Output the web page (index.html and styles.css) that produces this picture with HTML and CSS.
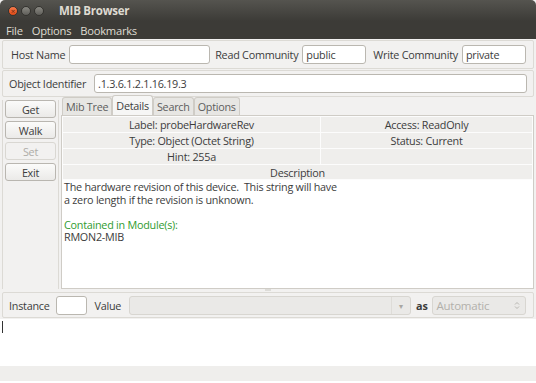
FILE: index.html
```html
<!DOCTYPE html>
<html lang="en">
<head>
<meta charset="UTF-8">
<title>MIB Browser</title>
<link rel="stylesheet" href="styles.css">
</head>
<body>

<div class="window">
    <!-- title bar -->
    <div class="titlebar">
        <span class="wbtn close">&times;</span>
        <span class="wbtn"></span>
        <span class="wbtn"></span>
        <span class="title">MIB Browser</span>
    </div>
    <div class="menubar">
        <span>File</span>
        <span>Options</span>
        <span>Bookmarks</span>
    </div>

    <div class="body">
        <!-- host / community -->
        <div class="panel row1">
            <label>Host Name</label>
            <input class="field host" type="text">
            <label>Read Community</label>
            <input class="field comm" type="text" value="public">
            <label>Write Community</label>
            <input class="field comm" type="text" value="private">
        </div>

        <div class="panel row2">
            <label>Object Identifier</label>
            <input class="field oid" type="text" value=".1.3.6.1.2.1.16.19.3">
        </div>

        <div class="main">
            <div class="actions">
                <button class="btn">Get</button>
                <button class="btn">Walk</button>
                <button class="btn" disabled>Set</button>
                <button class="btn">Exit</button>
            </div>

            <div class="tabs-wrap">
                <div class="tabs">
                    <span class="tab">Mib Tree</span>
                    <span class="tab active">Details</span>
                    <span class="tab">Search</span>
                    <span class="tab">Options</span>
                </div>
                <div class="tab-page">
                    <div class="grid">
                        <div class="cell">Label: probeHardwareRev</div>
                        <div class="cell">Access: ReadOnly</div>
                        <div class="cell">Type: Object (Octet String)</div>
                        <div class="cell">Status: Current</div>
                        <div class="cell">Hint: 255a</div>
                        <div class="cell"></div>
                    </div>
                    <div class="desc-head">Description</div>
                    <div class="desc">
                        <p>The hardware revision of this device.&nbsp; This string will have</p>
                        <p>a zero length if the revision is unknown.</p>
                        <p>&nbsp;</p>
                        <p class="module">Contained in Module(s):</p>
                        <p>RMON2-MIB</p>
                    </div>
                </div>
            </div>
        </div>

        <div class="splitter"><span class="grip"></span></div>

        <div class="panel bottom">
            <label>Instance</label>
            <input class="field inst" type="text">
            <label>Value</label>
            <div class="combo disabled"><span class="arrow">&#9662;</span></div>
            <label class="as">as</label>
            <div class="spin">
                Automatic
                <svg width="6" height="9" viewBox="0 0 6 9"><path d="M1 3.5 L3 1.5 L5 3.5 M1 5.5 L3 7.5 L5 5.5" fill="none" stroke="#b8b6b1" stroke-width="1"/></svg>
            </div>
        </div>

        <div class="output"><span class="caret"></span></div>

        <div class="statusbar"></div>
    </div>
</div>

</body>
</html>
```

FILE: styles.css
```css
* {
    box-sizing: border-box;
}
body {
    margin: 0;
    background: #fff;
    font-family: "Open Sans", "Noto Sans", sans-serif;
    font-size: 10.8px;
    letter-spacing: -0.25px;
    color: #3c3c3c;
}
.window {
    width: 536px;
    height: 381px;
    display: flex;
    flex-direction: column;
    background: #f2f1f0;
}
.titlebar {
    height: 21px;
    display: flex;
    align-items: center;
    padding-left: 8px;
    gap: 3px;
    background: linear-gradient(#55544f, #3c3b37);
    border-radius: 5px 5px 0 0;
}
.wbtn {
    width: 10px;
    height: 10px;
    border-radius: 50%;
    background: linear-gradient(#8a8983, #5f5e59);
    border: 1px solid #34332f;
    font-size: 8px;
    line-height: 7px;
    text-align: center;
    color: #6a2a10;
}
.wbtn.close {
    background: linear-gradient(#f67a4c, #df4a16);
}
.title {
    margin-left: 12px;
    font-weight: bold;
    font-size: 11.5px;
    color: #dfdbd2;
}
.menubar {
    height: 18px;
    display: flex;
    align-items: center;
    gap: 9px;
    padding-left: 6px;
    background: #3c3b37;
    color: #dfdbd2;
    font-size: 11.2px;
}
.body {
    flex: 1;
    display: flex;
    flex-direction: column;
    padding: 1px 2px 0 2px;
}
.panel {
    display: flex;
    align-items: center;
    border: 1px solid #dcdad5;
    border-radius: 2px;
}
label {
    white-space: nowrap;
}
.field {
    height: 19px;
    border: 1px solid #bab7b0;
    border-radius: 3px;
    background: #fff;
    font: inherit;
    letter-spacing: inherit;
    color: #3c3c3c;
    padding: 0 3px;
}
.row1 {
    height: 29px;
    padding: 0 8px;
}
.row1 .host {
    width: 141px;
    margin: 0 5px 0 4px;
}
.row1 .comm {
    width: 64px;
    margin: 0 7px 0 4px;
}
.row1 .comm:last-child {
    margin-right: 0;
}
.row2 {
    height: 27px;
    margin-top: 1px;
    padding: 0 6px;
}
.row2 .oid {
    flex: 1;
    margin-left: 8px;
}
.main {
    height: 192px;
    display: flex;
    gap: 2px;
}
.actions {
    width: 57px;
    margin-top: 3px;
    padding: 0 2px;
    display: flex;
    flex-direction: column;
    gap: 3px;
    border-right: 1px solid #dcdad5;
    border-left: 1px solid #dcdad5;
}
.btn {
    height: 18px;
    border: 1px solid #b9b6b0;
    border-radius: 3px;
    background: linear-gradient(#fbfbfa, #ebeae8);
    font: inherit;
    letter-spacing: inherit;
    color: #3c3c3c;
    padding: 0;
}
.btn:disabled {
    color: #aeaca7;
    background: #f2f1f0;
    border-color: #d9d7d2;
}
.tabs-wrap {
    flex: 1;
    display: flex;
    flex-direction: column;
}
.tabs {
    height: 18px;
    display: flex;
    align-items: flex-end;
    padding-left: 1px;
}
.tab {
    height: 18px;
    padding: 1px 3px 0;
    border: 1px solid #cfccc6;
    border-bottom: none;
    border-radius: 3px 3px 0 0;
    background: #e7e6e3;
    color: #5d5d5d;
}
.tab.active {
    height: 20px;
    padding-top: 2px;
    background: #f6f6f5;
    color: #3c3c3c;
}
.tab-page {
    flex: 1;
    display: flex;
    flex-direction: column;
    border: 1px solid #cfccc6;
    background: #f6f6f5;
}
.grid {
    display: grid;
    grid-template-columns: 257px 1fr;
    gap: 1px;
    padding: 1px;
    background: #fcfcfc;
}
.cell {
    height: 15px;
    line-height: 15px;
    text-align: center;
    background: #efeeec;
}
.desc-head {
    height: 15px;
    line-height: 15px;
    text-align: center;
    background: #efeeec;
    border: 1px solid #fcfcfc;
    border-top: none;
}
.desc {
    flex: 1;
    background: #fff;
    padding: 1px 2px;
}
.desc p {
    margin: 0;
    height: 12.5px;
    line-height: 12.5px;
}
.desc .module {
    color: #2f9b2f;
}
.splitter {
    height: 3px;
    display: flex;
    justify-content: center;
}
.grip {
    width: 6px;
    height: 2px;
    background: #dddcd8;
}
.bottom {
    height: 26px;
    padding: 0 6px;
    gap: 8px;
}
.inst {
    width: 31px;
    margin-left: -2px;
}
.combo {
    width: 282px;
    height: 19px;
    border: 1px solid #d8d6d1;
    border-radius: 3px;
    background: #eae9e7;
    display: flex;
    justify-content: flex-end;
    align-items: center;
}
.arrow {
    width: 19px;
    height: 17px;
    border-left: 1px solid #dedcd8;
    text-align: center;
    line-height: 17px;
    font-size: 8px;
    color: #a9a7a2;
}
.as {
    font-weight: bold;
    margin-left: -3px;
}
.spin {
    width: 94px;
    height: 19px;
    margin-left: -4px;
    border: 1px solid #d8d6d1;
    border-radius: 3px;
    background: #eae9e7;
    color: #b2b0ab;
    padding: 0 5px 0 4px;
    font-size: 11.5px;
    display: flex;
    justify-content: space-between;
    align-items: center;
}
.output {
    height: 47px;
    margin: 1px -2px 0;
    background: #fff;
    padding: 2px 0 0 2px;
}
.caret {
    display: block;
    width: 1px;
    height: 12px;
    background: #333;
}
.statusbar {
    flex: 1;
    background: #efeeec;
    margin: 0 -2px;
}
```
